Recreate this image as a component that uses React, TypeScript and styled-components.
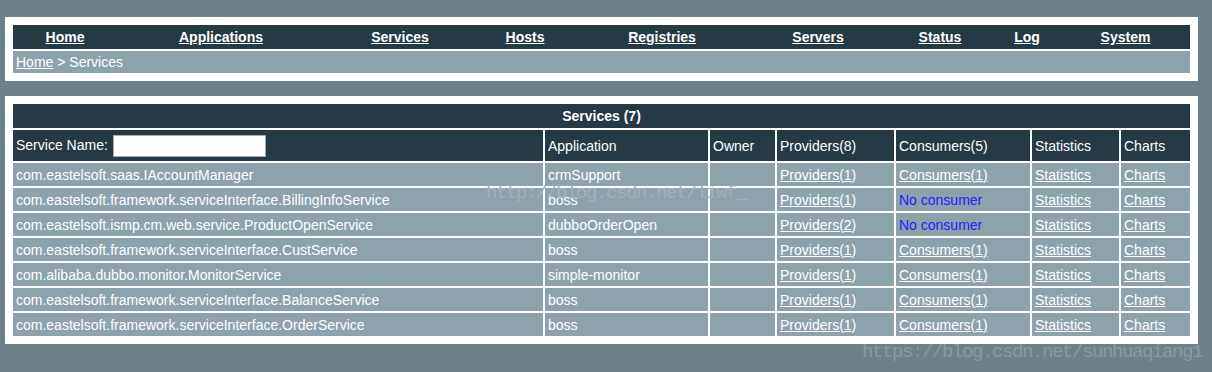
import React from "react";
import styled, { createGlobalStyle } from "styled-components";

const COLORS = {
  page: "#6d8189",
  dark: "#253a45",
  light: "#8da3ac",
  white: "#ffffff",
  blue: "#2020ff",
};

const GlobalStyle = createGlobalStyle`
  html, body {
    margin: 0;
    padding: 0;
    background: ${COLORS.page};
  }
  body {
    font-family: "Liberation Sans", Arial, sans-serif;
    font-size: 14px;
    color: ${COLORS.white};
  }
`;

const Page = styled.div`
  position: relative;
  width: 1212px;
  height: 372px;
  padding: 17px 14px 0 5px;
  box-sizing: border-box;
  display: flex;
  flex-direction: column;
  gap: 15px;
`;

const Panel = styled.div`
  background: ${COLORS.white};
  padding: 8px;
  display: flex;
  flex-direction: column;
  gap: 2px;
`;

const TablePanel = styled.div`
  background: ${COLORS.white};
  padding: 6px;
`;

const NavBar = styled.nav`
  display: grid;
  grid-template-columns: 104px 208px 150px 100px 174px 138px 106px 68px 1fr;
  height: 24px;
  background: ${COLORS.dark};
`;

const NavLink = styled.a`
  text-align: center;
  line-height: 24px;
  font-weight: bold;
  font-size: 14px;
  color: ${COLORS.white};
  text-decoration: underline;
`;

const Breadcrumb = styled.div`
  height: 22px;
  line-height: 22px;
  padding: 0 3px;
  background: ${COLORS.light};
  font-size: 14px;
`;

const Link = styled.a`
  color: ${COLORS.white};
  text-decoration: underline;
`;

const Table = styled.table`
  width: 100%;
  table-layout: fixed;
  border-collapse: separate;
  border-spacing: 2px;
  font-size: 14px;
`;

const Title = styled.th`
  height: 24px;
  padding: 0;
  background: ${COLORS.dark};
  font-weight: bold;
  text-align: center;
`;

const HeadCell = styled.th`
  height: 31px;
  padding: 0 3px;
  background: ${COLORS.dark};
  font-weight: normal;
  text-align: left;
  white-space: nowrap;
`;

const Cell = styled.td`
  height: 23px;
  padding: 0 3px;
  background: ${COLORS.light};
  white-space: nowrap;
  overflow: hidden;
`;

const SearchInput = styled.input`
  width: 153px;
  height: 22px;
  margin: 0 0 0 5px;
  padding: 0 3px;
  box-sizing: border-box;
  border: 1px solid #a9a9a9;
  background: ${COLORS.white};
  vertical-align: middle;
`;

const NoConsumer = styled.span`
  color: ${COLORS.blue};
`;

const Watermark = styled.div<{ $top: number; $left: number; $color: string }>`
  position: absolute;
  top: ${(p) => p.$top}px;
  left: ${(p) => p.$left}px;
  font-family: "Liberation Mono", "DejaVu Sans Mono", monospace;
  font-size: 19px;
  letter-spacing: -1.4px;
  line-height: 1;
  color: ${(p) => p.$color};
  pointer-events: none;
  white-space: nowrap;
`;

const NAV = [
  "Home",
  "Applications",
  "Services",
  "Hosts",
  "Registries",
  "Servers",
  "Status",
  "Log",
  "System",
];

const COLUMN_WIDTHS = [530, 163, 65, 117, 134, 87, 69];

type Row = {
  service: string;
  app: string;
  providers: number;
  consumers: number;
};

const ROWS: Row[] = [
  { service: "com.eastelsoft.saas.IAccountManager", app: "crmSupport", providers: 1, consumers: 1 },
  { service: "com.eastelsoft.framework.serviceInterface.BillingInfoService", app: "boss", providers: 1, consumers: 0 },
  { service: "com.eastelsoft.ismp.cm.web.service.ProductOpenService", app: "dubboOrderOpen", providers: 2, consumers: 0 },
  { service: "com.eastelsoft.framework.serviceInterface.CustService", app: "boss", providers: 1, consumers: 1 },
  { service: "com.alibaba.dubbo.monitor.MonitorService", app: "simple-monitor", providers: 1, consumers: 1 },
  { service: "com.eastelsoft.framework.serviceInterface.BalanceService", app: "boss", providers: 1, consumers: 1 },
  { service: "com.eastelsoft.framework.serviceInterface.OrderService", app: "boss", providers: 1, consumers: 1 },
];

const App = () => {
  return (
    <Page>
      <GlobalStyle />
      <Panel>
        <NavBar>
          {NAV.map((item) => (
            <NavLink key={item} href="#">
              {item}
            </NavLink>
          ))}
        </NavBar>
        <Breadcrumb>
          <Link href="#">Home</Link> &gt; Services
        </Breadcrumb>
      </Panel>

      <TablePanel>
        <Table>
          <colgroup>
            {COLUMN_WIDTHS.map((w, i) => (
              <col key={i} style={{ width: w }} />
            ))}
          </colgroup>
          <thead>
            <tr>
              <Title colSpan={7}>Services (7)</Title>
            </tr>
            <tr>
              <HeadCell>
                Service Name:
                <SearchInput type="text" />
              </HeadCell>
              <HeadCell>Application</HeadCell>
              <HeadCell>Owner</HeadCell>
              <HeadCell>Providers(8)</HeadCell>
              <HeadCell>Consumers(5)</HeadCell>
              <HeadCell>Statistics</HeadCell>
              <HeadCell>Charts</HeadCell>
            </tr>
          </thead>
          <tbody>
            {ROWS.map((row) => (
              <tr key={row.service}>
                <Cell>{row.service}</Cell>
                <Cell>{row.app}</Cell>
                <Cell />
                <Cell>
                  <Link href="#">Providers({row.providers})</Link>
                </Cell>
                <Cell>
                  {row.consumers > 0 ? (
                    <Link href="#">Consumers({row.consumers})</Link>
                  ) : (
                    <NoConsumer>No consumer</NoConsumer>
                  )}
                </Cell>
                <Cell>
                  <Link href="#">Statistics</Link>
                </Cell>
                <Cell>
                  <Link href="#">Charts</Link>
                </Cell>
              </tr>
            ))}
          </tbody>
        </Table>
      </TablePanel>

      <Watermark $top={184} $left={486} $color="#a0b2b9">
        http://blog.csdn.net/liwf_
      </Watermark>
      <Watermark $top={343} $left={862} $color="#8a9aa0">
        https://blog.csdn.net/sunhuaqiang1
      </Watermark>
    </Page>
  );
};

export default App;
